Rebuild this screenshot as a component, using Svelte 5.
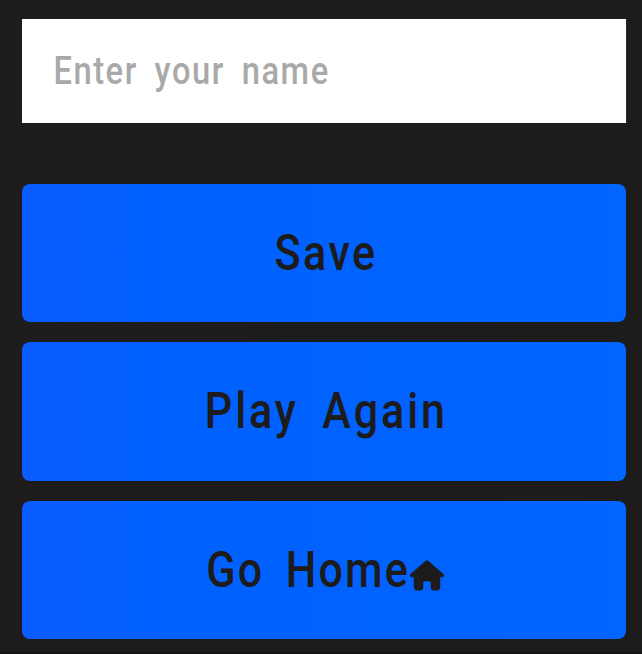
<script>
  let name = $state('');
</script>

<main>
  <input type="text" placeholder="Enter your name" aria-label="Name" bind:value={name} />
  <button type="button"><span class="save">Save</span></button>
  <button type="button"><span class="play">Play Again</span></button>
  <button type="button">
    <span class="home">Go Home</span><svg viewBox="0 0 576 512" aria-hidden="true"><path d="M575.8 255.5c0 18-15 32.1-32 32.1h-32l.7 160.2c0 35.3-21.5 64.2-56.5 64.2H400c-26 0-48-18-48-48v-80c0-20-14-32-32-32h-64c-18 0-32 12-32 32v80c0 30-22 48-48 48h-56c-35 0-56-29-56-64V287.6H32c-18 0-32-14-32-32.1 0-9 3-17 10-24L266.4 8c7-7 15-8 22-8s15 2 21 7l255.4 224.5c8 7 12 15 11 24z" /></svg>
  </button>
</main>

<style>
  :global(body) {
    margin: 0;
    background: #1d1b1c;
  }
  main {
    box-sizing: border-box;
    height: 654px;
    padding: 19px 16px 0 22px;
    border-bottom: 2px solid #151314;
    display: flex;
    flex-direction: column;
    gap: 20px;
    overflow: hidden;
    font-family: Roboto, 'Liberation Sans', sans-serif;
  }
  input,
  button {
    box-sizing: border-box;
    width: 100%;
    border: 0;
    font-family: inherit;
    font-weight: 500;
  }
  input {
    flex: 0 0 104px;
    width: calc(100% / 0.86);
    margin-bottom: 41px;
    padding: 0 32px 0 36.5px;
    border-radius: 0;
    outline: 0;
    background: #fff;
    color: #1d1b1c;
    font-size: 38px;
    letter-spacing: 1.8px;
    word-spacing: 8.3px;
    transform: scaleX(0.8605);
    transform-origin: left;
  }
  input::placeholder {
    color: #a9a9a9;
    opacity: 1;
  }
  button {
    flex: 0 0 138.3px;
    display: flex;
    align-items: center;
    justify-content: center;
    padding: 0;
    border-radius: 8px;
    background: linear-gradient(90deg, #0a5cff 0%, #0061ff 25%, #0062ff 65%, #0066ff 100%);
    color: #1d1b1c;
    font-size: 50px;
    line-height: 60px;
    white-space: nowrap;
  }
  span {
    transform: scaleX(0.86);
  }
  .save {
    margin-left: 4px;
    letter-spacing: 3px;
  }
  .play {
    margin-left: 4px;
    letter-spacing: 3.4px;
    word-spacing: 11.5px;
  }
  .home {
    margin-left: -31.5px;
    letter-spacing: 2.6px;
    word-spacing: 9.8px;
    transform-origin: right;
  }
  svg {
    width: 34px;
    height: 31px;
    margin: 11px 0 0;
    fill: currentColor;
  }
</style>
